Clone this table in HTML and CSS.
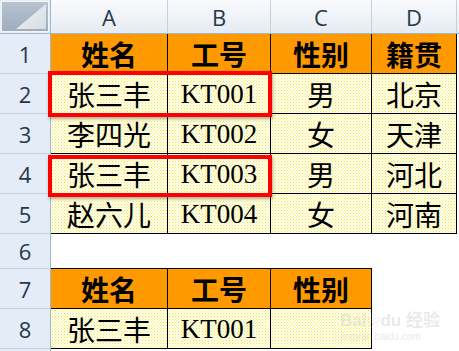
FILE: index.html
```html
<!DOCTYPE html>
<html>
<head>
<meta charset="utf-8">
<link rel="stylesheet" href="styles.css">
</head>
<body>
<div class="sheet">
  <div class="grid">
    <div class="corner">
      <svg width="50" height="33" viewBox="0 0 50 33">
        <defs>
          <linearGradient id="cg" x1="0" y1="0" x2="0" y2="1">
            <stop offset="0" stop-color="#b7c3d1"/>
            <stop offset="1" stop-color="#9eacbd"/>
          </linearGradient>
          <linearGradient id="tg" x1="0" y1="0" x2="1" y2="1">
            <stop offset="0" stop-color="#f4f6f8"/>
            <stop offset="1" stop-color="#d5dbe3"/>
          </linearGradient>
        </defs>
        <rect x="0" y="0" width="50" height="33" fill="#e9eef5"/>
        <rect x="1.5" y="1.5" width="47" height="30" fill="url(#cg)" stroke="#f1f4f8" stroke-width="1"/>
        <polygon points="16,29 46,29 46,4" fill="url(#tg)"/>
      </svg>
    </div>
    <div class="ch">A</div><div class="ch">B</div><div class="ch">C</div><div class="ch">D</div><div class="ch ch-end"></div>

    <div class="rh">1</div><div class="c hd">姓名</div><div class="c hd">工号</div><div class="c hd">性别</div><div class="c hd">籍贯</div><div class="e"></div>
    <div class="rh">2</div><div class="c dt">张三丰</div><div class="c dt lat">KT001</div><div class="c dt">男</div><div class="c dt">北京</div><div class="e"></div>
    <div class="rh">3</div><div class="c dt">李四光</div><div class="c dt lat">KT002</div><div class="c dt">女</div><div class="c dt">天津</div><div class="e"></div>
    <div class="rh">4</div><div class="c dt">张三丰</div><div class="c dt lat">KT003</div><div class="c dt">男</div><div class="c dt">河北</div><div class="e"></div>
    <div class="rh">5</div><div class="c dt">赵六儿</div><div class="c dt lat">KT004</div><div class="c dt">女</div><div class="c dt">河南</div><div class="e"></div>
    <div class="rh">6</div><div class="gap"></div><div class="gap"></div><div class="gap"></div><div class="e"></div><div class="e"></div>
    <div class="rh">7</div><div class="c hd">姓名</div><div class="c hd">工号</div><div class="c hd">性别</div><div class="e"></div><div class="e"></div>
    <div class="rh">8</div><div class="c dt">张三丰</div><div class="c dt lat">KT001</div><div class="c dt"></div><div class="e"></div><div class="e"></div>
    <div class="rh rh-last"></div>
  </div>
  <div class="mark mark-1"></div>
  <div class="mark mark-2"></div>
  <div class="wm">
    <div class="wm-top">Bai<span class="paw">❀</span>du 经验</div>
    <div class="wm-bot">jingyan.baidu.com</div>
  </div>
</div>
</body>
</html>
```

FILE: styles.css
```css
html, body {
  margin: 0;
  padding: 0;
  background: #ffffff;
}

.sheet {
  position: relative;
  width: 459px;
  height: 351px;
  overflow: hidden;
}

.grid {
  display: grid;
  grid-template-columns: 51px 117px 103px 101px 85px 2px;
  grid-template-rows: 34px 40px 40px 40px 40px 40px 35px 40px 40px 3px;
}

.grid > div {
  box-sizing: border-box;
}

.corner {
  border-right: 1px solid #9eb6ce;
  border-bottom: 1px solid #9eb6ce;
  line-height: 0;
  overflow: hidden;
}

.ch {
  background: linear-gradient(#f9fbfd, #e6ebf2);
  border-right: 1px solid #c4d0dd;
  border-bottom: 1px solid #9eb6ce;
  display: flex;
  align-items: center;
  justify-content: center;
  font-family: "Open Sans", "Liberation Sans", sans-serif;
  font-size: 22px;
  color: #27384a;
}

.ch-end {
  border-right: none;
}

.rh {
  background: #e4ecf7;
  border-right: 1px solid #9eb6ce;
  border-bottom: 1px solid #c4d0dd;
  display: flex;
  align-items: center;
  justify-content: center;
  font-family: "Open Sans", "Liberation Sans", sans-serif;
  font-size: 22px;
  color: #27384a;
}

.rh-last {
  border-bottom: none;
}

.c {
  border-right: 1px solid #000;
  border-bottom: 1px solid #000;
  display: flex;
  align-items: center;
  justify-content: center;
  font-family: "Noto Sans CJK SC", "Noto Sans CJK JP", sans-serif;
  color: #000;
}

.hd {
  background: #ff9900;
  font-size: 28px;
  font-weight: 700;
}

.dt {
  background-color: #ffffff;
  background-image:
    radial-gradient(circle, #f4ea2a 0 0.7px, transparent 0.95px),
    radial-gradient(circle, #f4ea2a 0 0.7px, transparent 0.95px);
  background-size: 3px 3px, 3px 3px;
  background-position: 0 0, 1.5px 1.5px;
  font-size: 28px;
  font-weight: 400;
}

.lat {
  font-family: "Liberation Serif", "Times New Roman", serif;
  font-size: 27px;
  padding-top: 2px;
}

.gap {
  border-bottom: 1px solid #000;
  background: #ffffff;
}

.e {
  background: #ffffff;
}

.mark {
  position: absolute;
  left: 48px;
  width: 224px;
  box-sizing: border-box;
  border: 4px solid #ff0000;
  box-shadow: 1px 2px 3px rgba(0, 0, 0, 0.3);
}

.mark-1 {
  top: 71px;
  height: 46px;
}

.mark-2 {
  top: 155px;
  height: 42px;
}

.wm {
  position: absolute;
  left: 340px;
  top: 312px;
  color: rgba(200, 200, 200, 0.4);
  font-family: "Liberation Sans", "Noto Sans CJK SC", sans-serif;
  font-weight: 700;
  line-height: 1;
}

.wm-top {
  font-size: 17px;
}

.paw {
  font-size: 14px;
}

.wm-bot {
  font-size: 10px;
  margin-top: 3px;
  font-weight: 400;
}
```
